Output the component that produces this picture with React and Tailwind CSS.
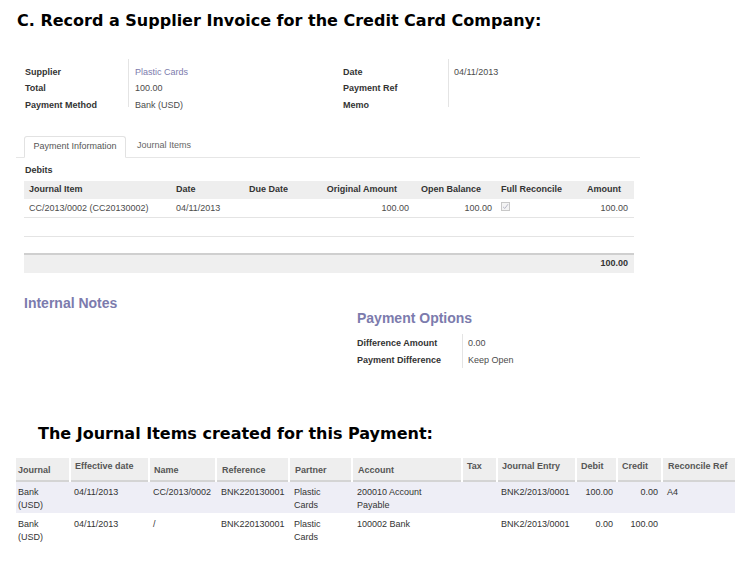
import React from 'react';

const ui = { fontFamily: '"Liberation Sans", Arial, sans-serif' };
const heading = { fontFamily: '"DejaVu Sans", Verdana, sans-serif' };

function FieldRow({ label, value, link }) {
  return (
    <div className="flex h-[16.5px] items-center">
      <div className="w-[103px] font-bold text-[#333]">{label}</div>
      <div className={`pl-[7px] ${link ? 'text-[#7c7bad]' : 'text-[#4c4c4c]'}`}>{value}</div>
    </div>
  );
}

function Checkbox() {
  return (
    <span className="inline-flex h-[9px] w-[9px] items-center justify-center border border-[#c8c8c8] bg-[#f4f4f4]">
      <svg width="7" height="7" viewBox="0 0 7 7">
        <path d="M1 3.8 L2.8 5.5 L6 1.2" fill="none" stroke="#b9b9c9" strokeWidth="1" />
      </svg>
    </span>
  );
}

const journalRows = [
  {
    journal: ['Bank', '(USD)'], date: '04/11/2013', name: 'CC/2013/0002', ref: 'BNK220130001',
    partner: ['Plastic', 'Cards'], account: ['200010 Account', 'Payable'], entry: 'BNK2/2013/0001',
    debit: '100.00', credit: '0.00', rec: 'A4', bg: 'bg-[#eeeef6]',
  },
  {
    journal: ['Bank', '(USD)'], date: '04/11/2013', name: '/', ref: 'BNK220130001',
    partner: ['Plastic', 'Cards'], account: ['100002 Bank'], entry: 'BNK2/2013/0001',
    debit: '0.00', credit: '100.00', rec: '', bg: 'bg-white',
  },
];

export default function App() {
  return (
    <div className="relative h-[568px] w-[756px] overflow-hidden bg-white text-[9px] leading-[13px]" style={ui}>
      <h1 className="pl-[17px] pt-[11px] text-[16px] font-bold leading-[20px] text-black" style={heading}>
        C. Record a Supplier Invoice for the Credit Card Company:
      </h1>

      {/* form header */}
      <div className="mt-[33px] flex pl-[25px]">
        <div className="w-[318px]">
          <div className="relative">
            <span className="absolute left-[103px] top-[-5px] h-[48px] w-px bg-[#e4e4e4]" />
            <FieldRow label="Supplier" value="Plastic Cards" link />
            <FieldRow label="Total" value="100.00" />
            <FieldRow label="Payment Method" value="Bank (USD)" />
          </div>
        </div>
        <div className="relative w-[200px]">
          <span className="absolute left-[105px] top-[-5px] h-[48px] w-px bg-[#e4e4e4]" />
          <div className="flex h-[16.5px] items-center">
            <div className="w-[105px] font-bold text-[#333]">Date</div>
            <div className="pl-[6px] text-[#4c4c4c]">04/11/2013</div>
          </div>
          <div className="flex h-[16.5px] items-center font-bold text-[#333]">Payment Ref</div>
          <div className="flex h-[16.5px] items-center font-bold text-[#333]">Memo</div>
        </div>
      </div>

      {/* notebook tabs */}
      <div className="ml-[16px] mt-[21px] flex w-[624px] items-end border-b border-[#e6e6e6] pl-[8px]">
        <div className="mb-[-1px] flex h-[22px] w-[102px] items-center justify-center rounded-t-[3px] border border-b-white border-[#e2e2e2] bg-white text-[#555]">
          Payment Information
        </div>
        <div className="flex h-[22px] items-center pl-[11px] text-[#666]">Journal Items</div>
      </div>

      <div className="ml-[24px] w-[610px]">
        <div className="mt-[5px] h-[14px] pl-[1px] font-bold leading-[14px] text-[#333]">Debits</div>
        <table className="mt-[4px] w-[610px] border-collapse text-[#4c4c4c]">
          <thead>
            <tr className="h-[18px] bg-[#eeeeee] font-bold text-[#333]">
              <th className="w-[147px] pl-[5px] text-left">Journal Item</th>
              <th className="w-[73px] pl-[5px] text-left">Date</th>
              <th className="w-[74px] pl-[5px] text-left">Due Date</th>
              <th className="w-[96px] pr-[17px] text-right">Original Amount</th>
              <th className="w-[83px] pr-[16px] text-right">Open Balance</th>
              <th className="w-[78px] pl-[4px] text-left">Full Reconcile</th>
              <th className="pr-[13px] text-right">Amount</th>
            </tr>
          </thead>
          <tbody>
            <tr className="h-[19px] border-b border-[#e4e4e4]">
              <td className="pl-[5px] pt-[1px]">CC/2013/0002 (CC20130002)</td>
              <td className="pl-[5px] pt-[1px]">04/11/2013</td>
              <td />
              <td className="pr-[5px] pt-[1px] text-right">100.00</td>
              <td className="pr-[5px] pt-[1px] text-right">100.00</td>
              <td className="pl-[4px]"><Checkbox /></td>
              <td className="pr-[6px] pt-[1px] text-right">100.00</td>
            </tr>
            <tr className="h-[19px] border-b border-[#e4e4e4]"><td colSpan={7} /></tr>
            <tr className="h-[17px]"><td colSpan={7} /></tr>
          </tbody>
          <tfoot>
            <tr className="h-[19px] border-t-2 border-[#cfcfcf] bg-[#efefef] font-bold text-[#333]">
              <td colSpan={7} className="pr-[6px] text-right">100.00</td>
            </tr>
          </tfoot>
        </table>
      </div>

      {/* notes and options */}
      <div className="flex">
        <div className="w-[357px] pl-[24px] pt-[22px]">
          <div className="text-[14px] font-bold leading-[16px] text-[#7c7bad]">Internal Notes</div>
        </div>
        <div className="pt-[37px]">
          <div className="text-[14px] font-bold leading-[16px] text-[#7c7bad]">Payment Options</div>
          <div className="relative mt-[9px]">
            <span className="absolute left-[105px] top-[-1px] h-[34px] w-px bg-[#e4e4e4]" />
            <div className="flex h-[17px] items-center">
              <div className="w-[105px] font-bold text-[#333]">Difference Amount</div>
              <div className="pl-[6px] text-[#4c4c4c]">0.00</div>
            </div>
            <div className="flex h-[17px] items-center">
              <div className="w-[105px] font-bold text-[#333]">Payment Difference</div>
              <div className="pl-[6px] text-[#4c4c4c]">Keep Open</div>
            </div>
          </div>
        </div>
      </div>

      <h2 className="pl-[38px] pt-[55px] text-[16px] font-bold leading-[20px] text-black" style={heading}>
        The Journal Items created for this Payment:
      </h2>

      {/* journal items list */}
      <table className="ml-[16px] mt-[14px] w-[719px] border-collapse text-[#333]">
        <thead>
          <tr className="h-[23px] border-b-2 border-[#d4d4d4] bg-[#eeeeee] align-top font-bold text-[#555]">
            <th className="w-[54px] border-r-2 border-white pl-[2px] pt-[6px] text-left">Journal</th>
            <th className="w-[79px] border-r-2 border-white pl-[4px] pt-[2px] text-left">Effective date</th>
            <th className="w-[67px] border-r-2 border-white pl-[4px] pt-[6px] text-left">Name</th>
            <th className="w-[73px] border-r-2 border-white pl-[5px] pt-[6px] text-left">Reference</th>
            <th className="w-[63px] border-r-2 border-white pl-[5px] pt-[6px] text-left">Partner</th>
            <th className="w-[110px] border-r-2 border-white pl-[5px] pt-[6px] text-left">Account</th>
            <th className="w-[35px] border-r-2 border-white pl-[4px] pt-[2px] text-left">Tax</th>
            <th className="w-[79px] border-r-2 border-white pl-[4px] pt-[2px] text-left">Journal Entry</th>
            <th className="w-[41px] border-r-2 border-white pl-[4px] pt-[2px] text-left">Debit</th>
            <th className="w-[45px] border-r-2 border-white pl-[4px] pt-[2px] text-left">Credit</th>
            <th className="pl-[5px] pt-[2px] text-left">Reconcile Ref</th>
          </tr>
        </thead>
        <tbody>
          {journalRows.map((r, i) => (
            <tr key={i} className={`h-[33px] border-t border-white align-top ${r.bg}`}>
              <td className="pl-[2px] pt-[4px]">{r.journal.map(l => <div key={l}>{l}</div>)}</td>
              <td className="pl-[4px] pt-[4px]">{r.date}</td>
              <td className="pl-[4px] pt-[4px]">{r.name}</td>
              <td className="pl-[5px] pt-[4px]">{r.ref}</td>
              <td className="pl-[5px] pt-[4px]">{r.partner.map(l => <div key={l}>{l}</div>)}</td>
              <td className="pl-[5px] pt-[4px]">{r.account.map(l => <div key={l}>{l}</div>)}</td>
              <td className="pt-[4px]" />
              <td className="pl-[4px] pt-[4px]">{r.entry}</td>
              <td className="pr-[4px] pt-[4px] text-right">{r.debit}</td>
              <td className="pr-[4px] pt-[4px] text-right">{r.credit}</td>
              <td className="pl-[5px] pt-[4px]">{r.rec}</td>
            </tr>
          ))}
        </tbody>
      </table>
    </div>
  );
}
